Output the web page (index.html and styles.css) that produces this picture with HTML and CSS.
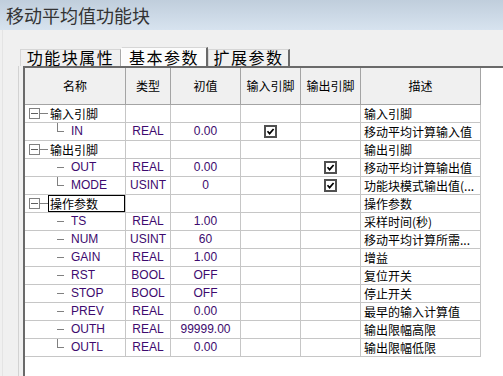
FILE: index.html
```html
<!DOCTYPE html>
<html>
<head>
    <title>移动平均值功能块</title>
    <link rel="stylesheet" href="styles.css">
</head>
<body>
    <div class="window">
        <div class="titlebar">移动平均值功能块</div>
        <div class="dialog">
            <div class="tabs">
                <div class="tab t1">功能块属性</div>
                <div class="tab t2 active">基本参数</div>
                <div class="tab t3 last">扩展参数</div>
            </div>
            <div class="pane">
                <div class="grid">
                    <div class="row head">
                        <div class="c c1">名称</div>
                        <div class="c c2">类型</div>
                        <div class="c c3">初值</div>
                        <div class="c c4">输入引脚</div>
                        <div class="c c5">输出引脚</div>
                        <div class="c c6">描述</div>
                    </div>

                    <div class="row">
                        <div class="c c1 name"><span class="toggle"></span><span class="conn"></span><span class="gtext">输入引脚</span></div>
                        <div class="c c2"></div>
                        <div class="c c3"></div>
                        <div class="c c4"></div>
                        <div class="c c5"></div>
                        <div class="c c6">输入引脚</div>
                    </div>
                    <div class="row">
                        <div class="c c1 name"><span class="branch end"></span><span class="pin">IN</span></div>
                        <div class="c c2 val">REAL</div>
                        <div class="c c3 val">0.00</div>
                        <div class="c c4 chk"><svg width="13" height="13" viewBox="0 0 13 13"><rect x="1" y="1" width="11" height="11" fill="#fff" stroke="#505050" stroke-width="2"/><path d="M3.5 6.3 L5.6 8.6 L9.6 4" fill="none" stroke="#000" stroke-width="1.7"/></svg></div>
                        <div class="c c5"></div>
                        <div class="c c6">移动平均计算输入值</div>
                    </div>

                    <div class="row">
                        <div class="c c1 name"><span class="toggle"></span><span class="conn"></span><span class="gtext">输出引脚</span></div>
                        <div class="c c2"></div>
                        <div class="c c3"></div>
                        <div class="c c4"></div>
                        <div class="c c5"></div>
                        <div class="c c6">输出引脚</div>
                    </div>
                    <div class="row">
                        <div class="c c1 name"><span class="branch"></span><span class="pin">OUT</span></div>
                        <div class="c c2 val">REAL</div>
                        <div class="c c3 val">0.00</div>
                        <div class="c c4"></div>
                        <div class="c c5 chk"><svg width="13" height="13" viewBox="0 0 13 13"><rect x="1" y="1" width="11" height="11" fill="#fff" stroke="#505050" stroke-width="2"/><path d="M3.5 6.3 L5.6 8.6 L9.6 4" fill="none" stroke="#000" stroke-width="1.7"/></svg></div>
                        <div class="c c6">移动平均计算输出值</div>
                    </div>
                    <div class="row">
                        <div class="c c1 name"><span class="branch end"></span><span class="pin">MODE</span></div>
                        <div class="c c2 val">USINT</div>
                        <div class="c c3 val">0</div>
                        <div class="c c4"></div>
                        <div class="c c5 chk"><svg width="13" height="13" viewBox="0 0 13 13"><rect x="1" y="1" width="11" height="11" fill="#fff" stroke="#505050" stroke-width="2"/><path d="M3.5 6.3 L5.6 8.6 L9.6 4" fill="none" stroke="#000" stroke-width="1.7"/></svg></div>
                        <div class="c c6">功能块模式输出值(...</div>
                    </div>

                    <div class="row">
                        <div class="c c1 name"><span class="toggle"></span><span class="conn"></span><span class="gtext sel">操作参数</span></div>
                        <div class="c c2"></div>
                        <div class="c c3"></div>
                        <div class="c c4"></div>
                        <div class="c c5"></div>
                        <div class="c c6">操作参数</div>
                    </div>
                    <div class="row">
                        <div class="c c1 name"><span class="branch"></span><span class="pin">TS</span></div>
                        <div class="c c2 val">REAL</div>
                        <div class="c c3 val">1.00</div>
                        <div class="c c4"></div>
                        <div class="c c5"></div>
                        <div class="c c6">采样时间(秒)</div>
                    </div>
                    <div class="row">
                        <div class="c c1 name"><span class="branch"></span><span class="pin">NUM</span></div>
                        <div class="c c2 val">USINT</div>
                        <div class="c c3 val">60</div>
                        <div class="c c4"></div>
                        <div class="c c5"></div>
                        <div class="c c6">移动平均计算所需...</div>
                    </div>
                    <div class="row">
                        <div class="c c1 name"><span class="branch"></span><span class="pin">GAIN</span></div>
                        <div class="c c2 val">REAL</div>
                        <div class="c c3 val">1.00</div>
                        <div class="c c4"></div>
                        <div class="c c5"></div>
                        <div class="c c6">增益</div>
                    </div>
                    <div class="row">
                        <div class="c c1 name"><span class="branch"></span><span class="pin">RST</span></div>
                        <div class="c c2 val">BOOL</div>
                        <div class="c c3 val">OFF</div>
                        <div class="c c4"></div>
                        <div class="c c5"></div>
                        <div class="c c6">复位开关</div>
                    </div>
                    <div class="row">
                        <div class="c c1 name"><span class="branch"></span><span class="pin">STOP</span></div>
                        <div class="c c2 val">BOOL</div>
                        <div class="c c3 val">OFF</div>
                        <div class="c c4"></div>
                        <div class="c c5"></div>
                        <div class="c c6">停止开关</div>
                    </div>
                    <div class="row">
                        <div class="c c1 name"><span class="branch"></span><span class="pin">PREV</span></div>
                        <div class="c c2 val">REAL</div>
                        <div class="c c3 val">0.00</div>
                        <div class="c c4"></div>
                        <div class="c c5"></div>
                        <div class="c c6">最早的输入计算值</div>
                    </div>
                    <div class="row">
                        <div class="c c1 name"><span class="branch"></span><span class="pin">OUTH</span></div>
                        <div class="c c2 val">REAL</div>
                        <div class="c c3 val">99999.00</div>
                        <div class="c c4"></div>
                        <div class="c c5"></div>
                        <div class="c c6">输出限幅高限</div>
                    </div>
                    <div class="row">
                        <div class="c c1 name"><span class="branch end"></span><span class="pin">OUTL</span></div>
                        <div class="c c2 val">REAL</div>
                        <div class="c c3 val">0.00</div>
                        <div class="c c4"></div>
                        <div class="c c5"></div>
                        <div class="c c6">输出限幅低限</div>
                    </div>
                </div>
            </div>
        </div>
    </div>
</body>
</html>
```

FILE: styles.css
```css
body {
    margin: 0;
    background: #f0f0f0;
    font-family: "Noto Sans CJK SC", sans-serif;
    font-size: 12px;
    color: #000;
}

.window {
    display: flex;
    flex-direction: column;
    height: 376px;
    overflow: hidden;
}

.titlebar {
    height: 30px;
    line-height: 30px;
    padding-left: 6px;
    font-size: 18px;
    color: #333;
    background: linear-gradient(#c0cedc, #d7e3ef);
}

.dialog {
    flex: 1;
    display: flex;
    flex-direction: column;
    margin-left: 2px;
    border-left: 1px solid #e4e4e4;
}

/* tab strip */
.tabs {
    display: flex;
    align-items: flex-end;
    padding-top: 17px;
    margin-left: 17px;
}

.tab {
    box-sizing: border-box;
    height: 17px;
    line-height: 15px;
    font-size: 16px;
    letter-spacing: 1.5px;
    text-align: center;
    border: 1px solid #d6d6d6;
    border-bottom: 0;
    border-right-color: #a8a8a8;
}

.tab.t1 { width: 101px; }
.tab.t2 { width: 87px; }
.tab.t3 { width: 82px; }

.tab.active {
    height: 19px;
    padding-top: 2px;
    background: #fcfcfc;
    border-left-color: #fff;
    border-right: 2px solid #6a6a6a;
}

.tab.last {
    border-right: 2px solid #6a6a6a;
}

.pane {
    flex: 1;
    display: flex;
    margin-left: 15px;
    padding-left: 4px;
    border-left: 1px solid #d2d2d2;
}

.grid {
    flex: 1;
    background: #fff;
    border-top: 2px solid #6a6a6a;
    border-left: 2px solid #6a6a6a;
}

/* rows and cells */
.row {
    display: flex;
    height: 18px;
}

.c {
    box-sizing: border-box;
    height: 100%;
    line-height: 17px;
    border-right: 1px solid #c6c6c6;
    border-bottom: 1px solid #c6c6c6;
    white-space: nowrap;
    overflow: hidden;
}

.c1 { width: 101px; }
.c2 { width: 45px; }
.c3 { width: 70px; }
.c4 { width: 60px; }
.c5 { width: 60px; }
.c6 { width: 120px; padding-left: 3px; }

.row.head {
    height: 37px;
}

.head .c {
    line-height: 36px;
    text-align: center;
    padding-left: 0;
    background: #f0f0f0;
    border-color: #a4a4a4;
}

.val {
    text-align: center;
    font-family: "Liberation Sans", sans-serif;
    color: #3d0a6e;
}

.chk {
    display: flex;
    align-items: center;
    justify-content: center;
}

/* tree column */
.name {
    display: flex;
    align-items: center;
}

.toggle {
    position: relative;
    box-sizing: border-box;
    width: 11px;
    height: 11px;
    margin-left: 4px;
    border: 1px solid #808080;
}

.toggle::after {
    content: "";
    position: absolute;
    left: 1px;
    right: 1px;
    top: 4px;
    height: 1px;
    background: #606060;
}

.conn {
    width: 8px;
    height: 1px;
    background: #808080;
}

.gtext {
    flex: 1;
    align-self: stretch;
    box-sizing: border-box;
    padding-left: 1px;
    line-height: 15px;
    border: 1px solid transparent;
}

.gtext.sel {
    border-color: #000;
}

.branch {
    width: 7px;
    height: 1px;
    margin-left: 32px;
    background: #808080;
}

.branch.end {
    align-self: flex-start;
    box-sizing: border-box;
    height: 9px;
    background: none;
    border-left: 1px solid #808080;
    border-bottom: 1px solid #808080;
}

.pin {
    margin-left: 7px;
    font-family: "Liberation Sans", sans-serif;
    color: #3d0a6e;
}
```
